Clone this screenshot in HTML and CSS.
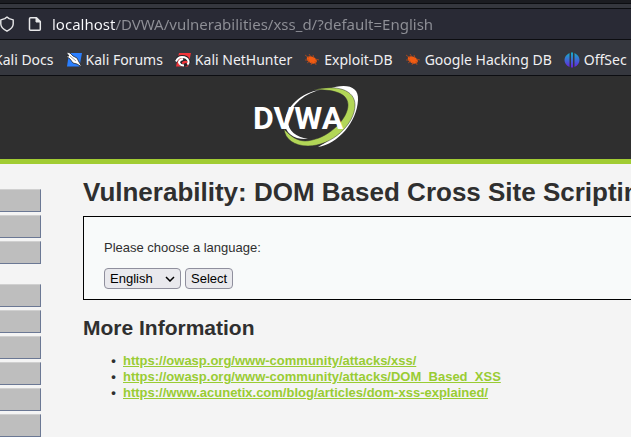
FILE: index.html
```html
<!DOCTYPE html>
<html lang="en">
<head>
    <meta charset="UTF-8">
    <meta name="viewport" content="width=device-width, initial-scale=1.0">
    <title>Vulnerability: DOM Based Cross Site Scripting (XSS)</title>
    <link rel="stylesheet" href="styles.css">
</head>
<body>
<div class="browser">
    <div class="tabstrip"></div>
    <div class="urlbar">
        <svg class="icon" viewBox="0 0 16 16"><path d="M8 1 L10.2 2.6 L14.2 3.8 V8 C14.2 11.4 11.2 13.6 8 15.2 C4.8 13.6 1.8 11.4 1.8 8 V3.8 L5.8 2.6 Z" fill="none" stroke="#e8e8ea" stroke-width="1.4" stroke-linejoin="round"/></svg>
        <svg class="icon" viewBox="0 0 16 16"><path d="M3.5 1.7 H9.5 L13.3 5.5 V13.3 Q13.3 14.3 12.3 14.3 H3.5 Q2.5 14.3 2.5 13.3 V2.7 Q2.5 1.7 3.5 1.7 Z" fill="none" stroke="#e8e8ea" stroke-width="1.5" stroke-linejoin="round"/><path d="M9 2 V6 H13 Z" fill="#e8e8ea" stroke="#e8e8ea"/></svg>
        <input class="url" type="text" aria-label="Address" value="localhost/DVWA/vulnerabilities/xss_d/?default=English">
    </div>
    <nav class="bookmarks">
        <a href="#">Kali Docs</a>
        <a href="#">
            <svg class="icon" viewBox="0 0 16 16"><path d="M3 1 H16 L13.5 14.5 H1 Z" fill="#2a7fff"/><path d="M0 0 L4 1 L7 4 L11 6 L13 10 L16 15 L11 12 L7 11 L4 7 L0 4 L3 4 Z" fill="#fff" stroke="#25262b" stroke-width="0.8"/><path d="M4 4 L10 9" stroke="#555" stroke-width="0.6"/></svg>
            Kali Forums
        </a>
        <a href="#">
            <svg class="icon" viewBox="0 0 16 16"><path d="M4 1 H16 L13 14.5 H1 Z" fill="#f0343a"/><path d="M1 10 Q2 4.5 7 4.5 Q12 4.5 13.5 8 Q10 6.5 7.5 8 Q4 10 6 12.5 Q8 14.5 12 12" fill="none" stroke="#25262b" stroke-width="3"/><path d="M1 9.5 Q3 5 7 5 Q12 5 13.5 9 Q14 11 12.5 12.5 M8 7 Q4 8 4 10.500 Q5 13.5 9 13.5" fill="none" stroke="#fff" stroke-width="2"/></svg>
            Kali NetHunter
        </a>
        <a href="#">
            <svg class="icon" viewBox="0 0 16 16"><path d="M3 5 Q7 3 11 6 L13 9 L12 11 Q8 13 5 10 Q2 8 3 5 Z" fill="#f25c12"/><path d="M1 3 L5 6 M5 2 L7 5 M9 3 L10 6 M1 8 H5 M3 11 L6 9 M7 13 L8 10 M12 13 L11 9 M11 7 L15 8" stroke="#b94a1c" stroke-width="0.8"/></svg>
            Exploit-DB
        </a>
        <a href="#">
            <svg class="icon" viewBox="0 0 16 16"><path d="M3 5 Q7 3 11 6 L13 9 L12 11 Q8 13 5 10 Q2 8 3 5 Z" fill="#f25c12"/><path d="M1 3 L5 6 M5 2 L7 5 M9 3 L10 6 M1 8 H5 M3 11 L6 9 M7 13 L8 10 M12 13 L11 9 M11 7 L15 8" stroke="#b94a1c" stroke-width="0.8"/></svg>
            Google Hacking DB
        </a>
        <a href="#">
            <svg class="icon" viewBox="0 0 16 16"><defs><linearGradient id="offsec" x1="0" y1="0" x2="0" y2="16" gradientUnits="userSpaceOnUse"><stop offset="0" stop-color="#12b5c9"/><stop offset="1" stop-color="#6a1ce0"/></linearGradient></defs><path d="M5.5 1 V15 Q0.5 12.5 0.5 8 Q0.5 3.5 5.5 1 Z M7 0.5 H9 V15.5 H7 Z M10.5 1 Q15.5 3.5 15.5 8 Q15.5 12.5 10.5 15 Z" fill="url(#offsec)"/></svg>
            OffSec
        </a>
    </nav>
</div>

<header class="header">
    <svg class="logo" viewBox="0 0 106 62" role="img" aria-label="DVWA">
        <path d="M74 3 C92 -3 105 0 104 14 C103 36 84 58 64 61 C80 53 98 34 98 17 C98 5 88 2 74 3 Z" fill="#fff"/>
        <path d="M59 4 C83 -2 101 4 101 19 C101 38 78 60 54 60 C40 60 31 53 30 43 C39 53 47 57 58 54 C77 50 94 32 94 19 C94 7 79 3 59 4 Z" fill="#b2d657" stroke="#2f2f2f" stroke-width="0.5"/>
        <path d="M66 4 C48 8 35 22 34 35 C34 45 42 51 54 53 C40 54 31 47 31 37 C31 21 48 6 66 4 Z" fill="#fff"/>
        <text class="logo-text" x="-1" y="43">DVWA</text>
    </svg>
</header>

<div class="page">
    <aside class="menu">
        <ul><li></li><li></li><li></li></ul>
        <ul><li></li><li></li><li></li><li></li><li></li><li></li></ul>
    </aside>
    <main class="content">
        <h1>Vulnerability: DOM Based Cross Site Scripting (XSS)</h1>
        <form class="vulnerable">
            <label for="language">Please choose a language:</label>
            <div class="controls">
                <div class="dropdown">
                    <select id="language">
                        <option>English</option>
                    </select>
                    <svg class="arrow" viewBox="0 0 10 6"><path d="M1 1 L5 5 L9 1" fill="none" stroke="#000" stroke-width="1.5"/></svg>
                </div>
                <button type="button">Select</button>
            </div>
        </form>
        <h2>More Information</h2>
        <ul class="links">
            <li><a href="#">https://owasp.org/www-community/attacks/xss/</a></li>
            <li><a href="#">https://owasp.org/www-community/attacks/DOM_Based_XSS</a></li>
            <li><a href="#">https://www.acunetix.com/blog/articles/dom-xss-explained/</a></li>
        </ul>
    </main>
</div>
</body>
</html>
```
FILE: styles.css
```css
* { box-sizing: border-box; }
body { margin: 0; overflow: hidden; background: #f4f4f4; color: #2f2f2f; font: 13px "Liberation Sans", Arial, sans-serif; }
ul { margin: 0; padding: 0; }

/* Browser bars */
.browser { font: 15px "Noto Sans", sans-serif; background: #35373e; }
.tabstrip { height: 9px; background: #35373e; border-top: 3px solid #1b1c21; border-bottom: 1px solid #0c0d11; box-shadow: inset 0 1px #0c0d11; }
.urlbar { display: flex; align-items: center; gap: 12px; height: 31px; margin-left: -1px; background: #292a35; border-bottom: 1px solid #0c0d11; }
.icon { flex: none; width: 16px; height: 16px; }
.url {
    flex: 1;
    margin-left: -3px;
    padding: 0;
    border: 0;
    outline: none;
    font: inherit;
    /* host is bright, the rest of the address is dimmed */
    color: transparent;
    background: linear-gradient(to right, #fbfbfe 64px, #8f9097 64px);
    -webkit-background-clip: text;
    background-clip: text;
}
.bookmarks { display: flex; align-items: center; gap: 12px; height: 36px; padding-top: 4px; margin-left: -6px; font-size: 14px; white-space: nowrap; border-bottom: 1px solid #0c0d11; }
.bookmarks a { display: flex; align-items: center; gap: 4px; color: #f0f0f2; text-decoration: none; }

/* Site header */
.header { display: flex; justify-content: center; padding: 10px 0 11px; background: #2f2f2f; border-bottom: 5px solid #a1cc33; }
.logo { width: 106px; height: 62px; margin-right: 18px; overflow: visible; }
.logo-text { font: bold 32px Roboto, sans-serif; fill: #fff; }

.page { display: flex; gap: 42px; padding-top: 13px; }
.menu { flex: none; width: 41px; padding-top: 12px; }
.menu ul { margin-bottom: 20px; list-style: none; }
.menu li { height: 23px; margin-bottom: 3px; background: #bebebe; border-top: 1px solid #d0d0d0; border-right: 1px solid #6b7894; border-bottom: 1px solid #6b7894; }

.content { flex: 1; min-width: 0; white-space: nowrap; }
h1 { margin: 0 0 9px; font-size: 26px; line-height: 30px; }
.vulnerable { margin-right: -20px; padding: 23px 20px 10px; background: #f8fafa; border: 1px solid #000; }
.vulnerable label { display: block; line-height: 15px; }
.controls { display: flex; gap: 4px; margin-top: 13px; }
.dropdown { display: grid; align-items: center; }
.dropdown select, .arrow { grid-area: 1 / 1; }
.arrow { width: 10px; height: 6px; justify-self: end; margin-right: 6px; pointer-events: none; }
select, button { height: 21px; padding: 0 5px; font: inherit; color: #000; background: #e9e9ed; border: 1px solid #8f8f9d; border-radius: 4px; }
select { width: 77px; appearance: none; }
h2 { margin: 16px 0 13px; font-size: 21px; line-height: 24px; }
.links { padding-left: 40px; line-height: 16px; list-style-type: "•\00a0\00a0"; }
.links li::marker { font-weight: bold; }
.links a { color: #9c3; font-weight: bold; }
```
